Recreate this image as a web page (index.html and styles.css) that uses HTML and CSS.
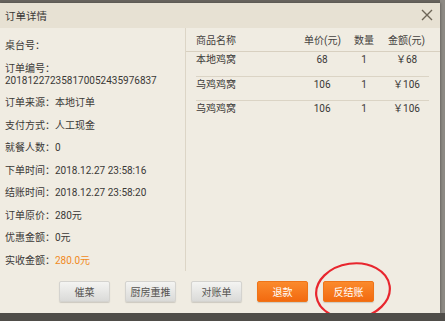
FILE: index.html
```html
<!DOCTYPE html>
<html lang="zh">
<head>
<meta charset="utf-8">
<link rel="stylesheet" href="styles.css">
</head>
<body>
<div class="screen">
  <div class="dialog">
    <div class="header">
      <span class="title">订单详情</span>
      <svg class="close" width="12" height="12" viewBox="0 0 12 12"><path d="M1 1 L11 11 M11 1 L1 11" stroke="#6d6557" stroke-width="1.4" fill="none"/></svg>
    </div>
    <div class="content">
      <div class="info">
        <div class="item">桌台号：</div>
        <div class="item two">订单编号：<br>201812272358170052435976837</div>
        <div class="item">订单来源：本地订单</div>
        <div class="item">支付方式：人工现金</div>
        <div class="item">就餐人数：0</div>
        <div class="item">下单时间：2018.12.27 23:58:16</div>
        <div class="item">结账时间：2018.12.27 23:58:20</div>
        <div class="item">订单原价：280元</div>
        <div class="item">优惠金额：0元</div>
        <div class="item">实收金额：<span class="paid">280.0元</span></div>
      </div>
      <div class="goods">
        <div class="thead">
          <div class="row">
            <span class="c-name">商品名称</span>
            <span class="c-num">单价(元)</span>
            <span class="c-num">数量</span>
            <span class="c-num c-amt">金额(元)</span>
          </div>
        </div>
        <div class="row body-row">
          <span class="c-name">本地鸡窝</span>
          <span class="c-num">68</span>
          <span class="c-num">1</span>
          <span class="c-num c-amt">￥68</span>
        </div>
        <div class="row body-row">
          <span class="c-name">乌鸡鸡窝</span>
          <span class="c-num">106</span>
          <span class="c-num">1</span>
          <span class="c-num c-amt">￥106</span>
        </div>
        <div class="row body-row last">
          <span class="c-name">乌鸡鸡窝</span>
          <span class="c-num">106</span>
          <span class="c-num">1</span>
          <span class="c-num c-amt">￥106</span>
        </div>
      </div>
    </div>
    <div class="footer">
      <button class="btn">催菜</button>
      <button class="btn">厨房重推</button>
      <button class="btn">对账单</button>
      <button class="btn orange">退款</button>
      <button class="btn orange">反结账</button>
    </div>
    <svg class="mark" width="84" height="64" viewBox="0 0 84 64"><ellipse cx="41" cy="31" rx="37" ry="27.5" transform="rotate(-8 41 31)" stroke="#e8262e" stroke-width="2.2" fill="none"/></svg>
  </div>
  <div class="behind"></div>
</div>
</body>
</html>
```

FILE: styles.css
```css
* { box-sizing: border-box; }
html, body { margin: 0; padding: 0; }
body {
  background: #4f4d49;
  font-family: Roboto, "Noto Sans CJK SC", sans-serif;
  font-size: 10px;
  color: #3a3836;
}
.screen {
  display: flex;
  align-items: flex-start;
  background: #67635d;
  height: 313px;
  padding-top: 3px;
}
.dialog {
  position: relative;
  width: 440px;
  height: 310px;
  background: #f0ece2;
  display: flex;
  flex-direction: column;
  box-shadow: 1px 0 2px rgba(0,0,0,0.25);
}
.behind {
  flex: 1;
  align-self: stretch;
  margin-top: -3px;
  background: #8d8a84;
}
.header {
  height: 25px;
  background: #e7e1d3;
  display: flex;
  align-items: center;
  justify-content: space-between;
  padding: 0 7px 0 5px;
}
.title {
  font-size: 10.5px;
  color: #3a3836;
}
.close { display: block; margin-top: -2px; }
.content {
  display: flex;
  height: 243px;
}
.info {
  width: 187px;
  border-right: 1px solid #dcd5c6;
  padding: 12px 0 0 5px;
}
.item {
  line-height: 12px;
  margin-bottom: 10.5px;
  white-space: nowrap;
}
.paid { color: #f08a22; }
.goods {
  flex: 1;
}
.thead {
  border-bottom: 1px solid #d8d0c0;
}
.row {
  display: grid;
  grid-template-columns: 108px 36px 48px 1fr;
  margin: 0 11px 0 10px;
}
.thead .row {
  height: 23px;
  align-items: center;
  color: #444240;
}
.body-row {
  height: 24.5px;
  line-height: 16px;
  border-bottom: 1px solid #dbd4c5;
}
.body-row.last { border-bottom: none; }
.c-num { text-align: center; white-space: nowrap; }
.c-amt { padding-right: 4px; }
.footer {
  flex: 1;
  display: flex;
  justify-content: center;
  align-items: flex-start;
  gap: 15px;
  padding: 9.5px 7px 0 0;
}
.btn {
  width: 51px;
  height: 21.5px;
  border: 1px solid #d4d3cf;
  border-radius: 2px;
  background: linear-gradient(#f4f4f2, #dadad8);
  box-shadow: 0 1px 1px rgba(0,0,0,0.15);
  font-family: Roboto, "Noto Sans CJK SC", sans-serif;
  font-size: 10px;
  color: #555350;
  padding: 0;
}
.btn.orange {
  background: linear-gradient(#fb8a2c, #f26a10);
  border-color: #ef7418;
  color: #fff;
}
.mark {
  position: absolute;
  left: 312px;
  top: 257px;
}
```
